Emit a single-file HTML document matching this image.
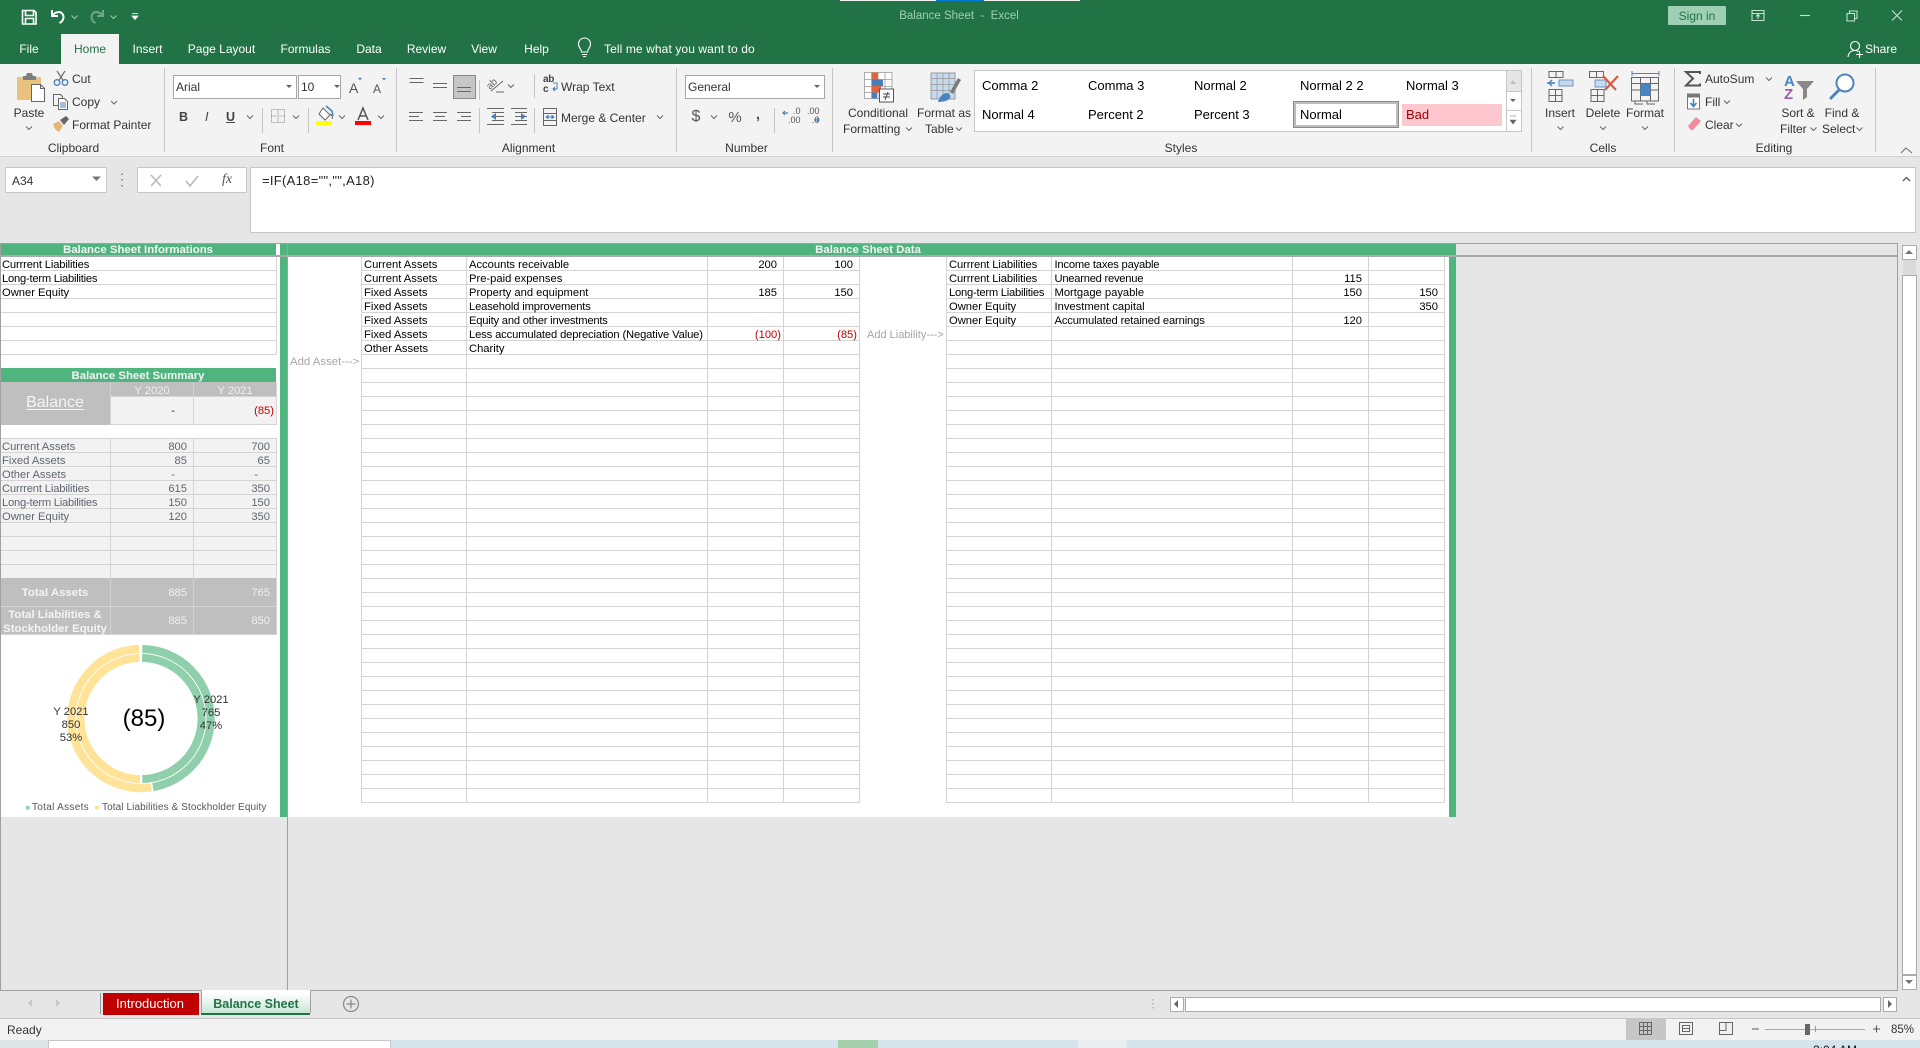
<!DOCTYPE html>
<html lang="en">
<head>
<meta charset="utf-8">
<title>Balance Sheet - Excel</title>
<style>
html,body{margin:0;padding:0;width:1920px;height:1048px;overflow:hidden;background:#e6e6e6;font-family:"Liberation Sans",Arial,sans-serif}
#r{position:relative;width:1920px;height:1048px;overflow:hidden}
.a{position:absolute}
.t{position:absolute;white-space:nowrap;line-height:14px;font-size:12px;color:#333}
.c{transform:translateX(-50%)}
.rt{transform:translateX(-100%)}
.w{color:#fff}
.d{font-size:11.2px;color:#000;margin-top:1px}
.g{font-size:11.2px;color:#5f6670;margin-top:1px}
.h{font-size:11.4px;font-weight:bold;color:#f4f4f4;margin-top:1px}
.n{color:#f0f0f0;font-size:11.2px;margin-top:1px}
.v{position:absolute;width:1px;background:#d4d4d4}
.gr{position:absolute;background-image:repeating-linear-gradient(to bottom,transparent 0,transparent 13px,#d4d4d4 13px,#d4d4d4 14px)}
.st{font-size:13px;color:#000}
svg{position:absolute;left:0;top:0}
</style>
</head>
<body>
<div id="r">

<!-- title + tabs -->
<div class="a" style="left:0;top:0;width:1920px;height:64px;background:#217346"></div>
<div class="a" style="left:840px;top:0;width:240px;height:1px;background:#f2f2f2"></div>
<div class="a" style="left:936px;top:0;width:48px;height:1px;background:#0078d7"></div>
<div class="t" style="left:959px;top:9px;color:#9fcfb4;font-size:11.5px;transform:translateX(-50%)">Balance Sheet &nbsp;-&nbsp; Excel</div>
<div class="a" style="left:1668px;top:6px;width:58px;height:19px;background:#9fcfb4;border-radius:1px"></div>
<div class="t c" style="left:1697px;top:9px;color:#217346">Sign in</div>
<div class="a" style="left:61px;top:34px;width:58px;height:30px;background:#f3f3f3"></div>
<div class="t c w" style="left:29px;top:42px">File</div>
<div class="t c" style="left:90px;top:42px;color:#217346">Home</div>
<div class="t c w" style="left:147.5px;top:42px">Insert</div>
<div class="t c w" style="left:221.5px;top:42px">Page Layout</div>
<div class="t c w" style="left:305.5px;top:42px">Formulas</div>
<div class="t c w" style="left:369px;top:42px">Data</div>
<div class="t c w" style="left:426.5px;top:42px">Review</div>
<div class="t c w" style="left:484px;top:42px">View</div>
<div class="t c w" style="left:536.5px;top:42px">Help</div>
<div class="t w" style="left:604px;top:42px;letter-spacing:.1px">Tell me what you want to do</div>
<div class="t w" style="left:1865px;top:42px">Share</div>

<!-- ribbon -->
<div class="a" style="left:0;top:64px;width:1920px;height:92px;background:#f3f3f3;border-bottom:1px solid #d2d2d2"></div>
<div class="a" style="left:164px;top:68px;width:1px;height:84px;background:#c6c6c6"></div>
<div class="a" style="left:396px;top:68px;width:1px;height:84px;background:#c6c6c6"></div>
<div class="a" style="left:676px;top:68px;width:1px;height:84px;background:#c6c6c6"></div>
<div class="a" style="left:832px;top:68px;width:1px;height:84px;background:#c6c6c6"></div>
<div class="a" style="left:1531px;top:68px;width:1px;height:84px;background:#c6c6c6"></div>
<div class="a" style="left:1674px;top:68px;width:1px;height:84px;background:#c6c6c6"></div>
<div class="a" style="left:1875px;top:68px;width:1px;height:84px;background:#c6c6c6"></div>

<!-- clipboard -->
<div class="t c" style="left:29px;top:106px">Paste</div>
<div class="t" style="left:72px;top:72px">Cut</div>
<div class="t" style="left:72px;top:95px">Copy</div>
<div class="t" style="left:72px;top:118px">Format Painter</div>
<div class="t c" style="left:73.5px;top:141px">Clipboard</div>

<!-- font -->
<div class="a" style="left:173px;top:75px;width:122px;height:22px;background:#fff;border:1px solid #a6a6a6"></div>
<div class="a" style="left:298px;top:75px;width:41px;height:22px;background:#fff;border:1px solid #a6a6a6"></div>
<div class="t" style="left:176px;top:80px">Arial</div>
<div class="t" style="left:301px;top:80px">10</div>
<div class="t" style="left:179px;top:110px;font-weight:bold;font-size:12.5px;color:#444">B</div>
<div class="t" style="left:205px;top:110px;font-style:italic;font-size:12.5px;color:#444">I</div>
<div class="t" style="left:226px;top:110px;font-weight:bold;font-size:12.5px;color:#444;text-decoration:underline">U</div>
<div class="t c" style="left:272px;top:141px">Font</div>

<!-- alignment -->
<div class="a" style="left:453px;top:75px;width:21px;height:22px;background:#c6c6c6;border:1px solid #8a8a8a"></div>
<div class="t" style="left:561px;top:80px">Wrap Text</div>
<div class="t" style="left:561px;top:111px">Merge &amp; Center</div>
<div class="t" style="left:543px;top:75px;font-size:10px;line-height:10px;color:#444;font-weight:bold;letter-spacing:-.3px">ab<br>c</div>
<div class="t c" style="left:528.5px;top:141px">Alignment</div>

<!-- number -->
<div class="a" style="left:685px;top:75px;width:138px;height:22px;background:#fff;border:1px solid #a6a6a6"></div>
<div class="t" style="left:688px;top:80px">General</div>
<div class="t c" style="left:696px;top:110px;font-size:16px;color:#555">$</div>
<div class="t c" style="left:735px;top:111px;font-size:15px;color:#555">%</div>
<div class="t c" style="left:758px;top:108px;font-size:15px;font-weight:bold;color:#555">,</div>
<div class="t" style="left:788px;top:107px;font-size:9px;line-height:9px;color:#555;text-align:right">&nbsp;.0<br>.00</div>
<div class="t" style="left:807px;top:107px;font-size:9px;line-height:9px;color:#555;text-align:right">.00<br>&nbsp;.0</div>
<div class="t c" style="left:746.5px;top:141px">Number</div>

<!-- styles -->
<div class="t c" style="left:878px;top:106px">Conditional</div>
<div class="t" style="left:843px;top:122px">Formatting</div>
<div class="t c" style="left:944px;top:106px">Format as</div>
<div class="t" style="left:925px;top:122px">Table</div>
<div class="a" style="left:974px;top:70px;width:546px;height:60px;background:#fff;border:1px solid #c6c6c6"></div>
<div class="t st" style="left:982px;top:79px">Comma 2</div>
<div class="t st" style="left:1088px;top:79px">Comma 3</div>
<div class="t st" style="left:1194px;top:79px">Normal 2</div>
<div class="t st" style="left:1300px;top:79px">Normal 2 2</div>
<div class="t st" style="left:1406px;top:79px">Normal 3</div>
<div class="t st" style="left:982px;top:108px">Normal 4</div>
<div class="t st" style="left:1088px;top:108px">Percent 2</div>
<div class="t st" style="left:1194px;top:108px">Percent 3</div>
<div class="a" style="left:1293px;top:101px;width:100px;height:21px;background:#fff;border:3px solid #bdbdbd;outline:1px solid #8a8a8a;outline-offset:-1px"></div>
<div class="t st" style="left:1300px;top:108px">Normal</div>
<div class="a" style="left:1402px;top:104px;width:100px;height:22px;background:#ffc7ce"></div>
<div class="t st" style="left:1406px;top:108px;color:#9c0006">Bad</div>
<div class="a" style="left:1506px;top:71px;width:14px;height:20px;background:#e6e6e6;border-left:1px solid #c6c6c6"></div>
<div class="a" style="left:1506px;top:91px;width:14px;height:19px;background:#fff;border-left:1px solid #c6c6c6;border-top:1px solid #c6c6c6"></div>
<div class="a" style="left:1506px;top:110px;width:14px;height:20px;background:#fff;border-left:1px solid #c6c6c6;border-top:1px solid #c6c6c6"></div>
<div class="t c" style="left:1181px;top:141px">Styles</div>

<!-- cells -->
<div class="t c" style="left:1560px;top:106px">Insert</div>
<div class="t c" style="left:1603px;top:106px">Delete</div>
<div class="t c" style="left:1645px;top:106px">Format</div>
<div class="t c" style="left:1603px;top:141px">Cells</div>

<!-- editing -->
<div class="t" style="left:1705px;top:72px">AutoSum</div>
<div class="t" style="left:1705px;top:95px">Fill</div>
<div class="t" style="left:1705px;top:118px">Clear</div>
<div class="t c" style="left:1798px;top:106px">Sort &amp;</div>
<div class="t" style="left:1780px;top:122px">Filter</div>
<div class="t c" style="left:1842px;top:106px">Find &amp;</div>
<div class="t" style="left:1822px;top:122px">Select</div>
<div class="t c" style="left:1774px;top:141px">Editing</div>

<!-- formula bar -->
<div class="a" style="left:5px;top:167px;width:100px;height:24px;background:#fff;border:1px solid #c6c6c6"></div>
<div class="t" style="left:12px;top:174px">A34</div>
<div class="a" style="left:137px;top:167px;width:108px;height:24px;background:#fff;border:1px solid #c6c6c6"></div>
<div class="a" style="left:250px;top:167px;width:1664px;height:64px;background:#fff;border:1px solid #c6c6c6"></div>
<div class="t" style="left:262px;top:174px;font-size:13px;letter-spacing:.3px;color:#222">=IF(A18="","",A18)</div>
<div class="t" style="left:222px;top:173px;font-family:'Liberation Serif',serif;font-style:italic;font-size:14px;color:#555">fx</div>

<!-- sheet -->
<div class="a" style="left:0;top:243px;width:1898px;height:1px;background:#a0a0a0"></div>
<div class="a" style="left:0;top:243px;width:1px;height:747px;background:#a0a0a0"></div>
<div class="a" style="left:287px;top:243px;width:1px;height:747px;background:#a0a0a0"></div>
<div class="a" style="left:1897px;top:243px;width:1px;height:747px;background:#a0a0a0"></div>
<div class="a" style="left:0;top:990px;width:1898px;height:1px;background:#a0a0a0"></div>
<div class="a" style="left:1px;top:244px;width:279px;height:573px;background:#fff"></div>
<div class="a" style="left:288px;top:257px;width:1161px;height:560px;background:#fff"></div>
<div class="a" style="left:280px;top:244px;width:7px;height:573px;background:#50b47e"></div>
<div class="a" style="left:1449px;top:257px;width:7px;height:560px;background:#50b47e"></div>
<div class="a" style="left:1px;top:244px;width:275px;height:11px;background:#50b47e"></div>
<div class="a" style="left:288px;top:244px;width:1168px;height:11px;background:#50b47e"></div>
<div class="a" style="left:1px;top:255px;width:1896px;height:2px;background:#ababab"></div>
<div class="a" style="left:276px;top:244px;width:4px;height:11px;background:#fff"></div>
<div class="t c h" style="left:138px;top:242px">Balance Sheet Informations</div>
<div class="t c h" style="left:868px;top:242px">Balance Sheet Data</div>

<!-- info table -->
<div class="gr" style="left:1px;top:257px;width:276px;height:98px"></div>
<div class="v" style="left:276px;top:257px;height:98px"></div>
<div class="t d" style="left:2px;top:257px;letter-spacing:-.15px">Currrent Liabilities</div>
<div class="t d" style="left:2px;top:271px;letter-spacing:-.23px">Long-term Liabilities</div>
<div class="t d" style="left:2px;top:285px">Owner Equity</div>

<!-- summary -->
<div class="a" style="left:1px;top:368px;width:275px;height:14px;background:#50b47e"></div>
<div class="t c h" style="left:138px;top:368px">Balance Sheet Summary</div>
<div class="a" style="left:1px;top:382px;width:109px;height:43px;background:#bfbfbf"></div>
<div class="a" style="left:111px;top:382px;width:165px;height:14px;background:#bfbfbf"></div>
<div class="a" style="left:111px;top:397px;width:165px;height:28px;background:#f2f2f2"></div>
<div class="v" style="left:193px;top:382px;height:43px"></div>
<div class="v" style="left:110px;top:382px;height:43px"></div>
<div class="v" style="left:276px;top:382px;height:43px"></div>
<div class="a" style="left:111px;top:396px;width:165px;height:1px;background:#d4d4d4"></div>
<div class="a" style="left:111px;top:424px;width:166px;height:1px;background:#d4d4d4"></div>
<div class="t c" style="left:55px;top:395px;font-size:16px;line-height:16px;color:#f5f5f5;text-decoration:underline;text-underline-offset:2px">Balance</div>
<div class="t c n" style="left:152px;top:383px">Y 2020</div>
<div class="t c n" style="left:235px;top:383px">Y 2021</div>
<div class="t rt g" style="left:175px;top:403px;color:#222">-</div>
<div class="t rt g" style="left:274px;top:403px;color:#c00000">(85)</div>

<div class="a" style="left:1px;top:438px;width:275px;height:140px;background:#f2f2f2"></div>
<div class="a" style="left:1px;top:438px;width:276px;height:1px;background:#d4d4d4"></div>
<div class="gr" style="left:1px;top:439px;width:276px;height:140px"></div>
<div class="v" style="left:110px;top:438px;height:196px"></div>
<div class="v" style="left:193px;top:438px;height:196px"></div>
<div class="v" style="left:276px;top:438px;height:196px"></div>
<div class="a" style="left:1px;top:578px;width:275px;height:56px;background:#bfbfbf"></div>
<div class="v" style="left:110px;top:578px;height:56px"></div>
<div class="v" style="left:193px;top:578px;height:56px"></div>
<div class="v" style="left:276px;top:578px;height:57px"></div>
<div class="a" style="left:1px;top:606px;width:275px;height:1px;background:#d4d4d4"></div>
<div class="a" style="left:1px;top:634px;width:276px;height:1px;background:#d4d4d4"></div>

<div class="t g" style="left:2px;top:439px">Current Assets</div><div class="t rt g" style="left:187px;top:439px">800</div><div class="t rt g" style="left:270px;top:439px">700</div>
<div class="t g" style="left:2px;top:453px">Fixed Assets</div><div class="t rt g" style="left:187px;top:453px">85</div><div class="t rt g" style="left:270px;top:453px">65</div>
<div class="t g" style="left:2px;top:467px">Other Assets</div><div class="t rt g" style="left:175px;top:467px">-</div><div class="t rt g" style="left:258px;top:467px">-</div>
<div class="t g" style="left:2px;top:481px;letter-spacing:-.15px">Currrent Liabilities</div><div class="t rt g" style="left:187px;top:481px">615</div><div class="t rt g" style="left:270px;top:481px">350</div>
<div class="t g" style="left:2px;top:495px;letter-spacing:-.23px">Long-term Liabilities</div><div class="t rt g" style="left:187px;top:495px">150</div><div class="t rt g" style="left:270px;top:495px">150</div>
<div class="t g" style="left:2px;top:509px">Owner Equity</div><div class="t rt g" style="left:187px;top:509px">120</div><div class="t rt g" style="left:270px;top:509px">350</div>

<div class="t c h" style="left:55px;top:585px">Total Assets</div>
<div class="t rt n" style="left:187px;top:585px">885</div><div class="t rt n" style="left:270px;top:585px">765</div>
<div class="t c h" style="left:55px;top:607px">Total Liabilities &amp;</div>
<div class="t c h" style="left:55px;top:621px">Stockholder Equity</div>
<div class="t rt n" style="left:187px;top:613px">885</div><div class="t rt n" style="left:270px;top:613px">850</div>

<!-- chart -->
<svg width="288" height="820" viewBox="0 0 288 820" style="pointer-events:none">
<g fill="none" transform="rotate(-90 141 718.5)">
<circle cx="141" cy="718.5" r="69.6" stroke="#8fcfac" stroke-width="8.2" pathLength="100" stroke-dasharray="47 100" stroke-dashoffset="-.3"/>
<circle cx="141" cy="718.5" r="69.6" stroke="#ffe398" stroke-width="8.2" pathLength="100" stroke-dasharray="52 100" stroke-dashoffset="-47.7"/>
<circle cx="141" cy="718.5" r="60.6" stroke="#8fcfac" stroke-width="8" pathLength="100" stroke-dasharray="49.4 100" stroke-dashoffset="-.3"/>
<circle cx="141" cy="718.5" r="60.6" stroke="#ffe398" stroke-width="8" pathLength="100" stroke-dasharray="49.4 100" stroke-dashoffset="-50.3"/>
</g>
<rect x="26" y="806" width="3.5" height="3.5" fill="#8fcfac"/>
<rect x="95" y="806" width="4" height="3.5" fill="#ffe398"/>
</svg>
<div class="t c" style="left:71px;top:706px;font-size:11.2px;line-height:13px;color:#333;text-align:center;transform:translateX(-50%)">Y 2021<br>850<br>53%</div>
<div class="t c" style="left:211px;top:694px;font-size:11.2px;line-height:13px;color:#333;text-align:center;transform:translateX(-50%)">Y 2021<br>765<br>47%</div>
<div class="t c" style="left:144px;top:705px;font-size:24px;line-height:28px;color:#000">(85)</div>
<div class="t" style="left:32px;top:801px;font-size:10px;color:#555;letter-spacing:.3px">Total Assets</div>
<div class="t" style="left:102px;top:801px;font-size:10px;color:#555;letter-spacing:.1px">Total Liabilities &amp; Stockholder Equity</div>

<!-- data table 1 -->
<div class="gr" style="left:361px;top:257px;width:499px;height:546px"></div>
<div class="v" style="left:361px;top:257px;height:546px"></div>
<div class="v" style="left:466px;top:257px;height:546px"></div>
<div class="v" style="left:707px;top:257px;height:546px"></div>
<div class="v" style="left:783px;top:257px;height:546px"></div>
<div class="v" style="left:859px;top:257px;height:546px"></div>
<div class="t d" style="left:364px;top:257px">Current Assets</div><div class="t d" style="left:469px;top:257px">Accounts receivable</div><div class="t d rt" style="left:777px;top:257px">200</div><div class="t d rt" style="left:853px;top:257px">100</div>
<div class="t d" style="left:364px;top:271px">Current Assets</div><div class="t d" style="left:469px;top:271px">Pre-paid expenses</div>
<div class="t d" style="left:364px;top:285px">Fixed Assets</div><div class="t d" style="left:469px;top:285px">Property and equipment</div><div class="t d rt" style="left:777px;top:285px">185</div><div class="t d rt" style="left:853px;top:285px">150</div>
<div class="t d" style="left:364px;top:299px">Fixed Assets</div><div class="t d" style="left:469px;top:299px;letter-spacing:-.15px">Leasehold improvements</div>
<div class="t d" style="left:364px;top:313px">Fixed Assets</div><div class="t d" style="left:469px;top:313px;letter-spacing:-.2px">Equity and other investments</div>
<div class="t d" style="left:364px;top:327px">Fixed Assets</div><div class="t d" style="left:469px;top:327px;letter-spacing:-.13px">Less accumulated depreciation (Negative Value)</div><div class="t d rt" style="left:781px;top:327px;color:#c00000">(100)</div><div class="t d rt" style="left:857px;top:327px;color:#c00000">(85)</div>
<div class="t d" style="left:364px;top:341px">Other Assets</div><div class="t d" style="left:469px;top:341px">Charity</div>
<div class="t d" style="left:290px;top:354px;color:#a6a6a6;font-size:11.4px">Add Asset---&gt;</div>

<!-- data table 2 -->
<div class="gr" style="left:946px;top:257px;width:499px;height:546px"></div>
<div class="v" style="left:946px;top:257px;height:546px"></div>
<div class="v" style="left:1051px;top:257px;height:546px"></div>
<div class="v" style="left:1292px;top:257px;height:546px"></div>
<div class="v" style="left:1368px;top:257px;height:546px"></div>
<div class="v" style="left:1444px;top:257px;height:546px"></div>
<div class="t d" style="left:949px;top:257px;letter-spacing:-.1px">Currrent Liabilities</div><div class="t d" style="left:1054.5px;top:257px;letter-spacing:-.2px">Income taxes payable</div>
<div class="t d" style="left:949px;top:271px;letter-spacing:-.1px">Currrent Liabilities</div><div class="t d" style="left:1054.5px;top:271px;letter-spacing:-.25px">Unearned revenue</div><div class="t d rt" style="left:1362px;top:271px">115</div>
<div class="t d" style="left:949px;top:285px;letter-spacing:-.23px">Long-term Liabilities</div><div class="t d" style="left:1054.5px;top:285px">Mortgage payable</div><div class="t d rt" style="left:1362px;top:285px">150</div><div class="t d rt" style="left:1438px;top:285px">150</div>
<div class="t d" style="left:949px;top:299px">Owner Equity</div><div class="t d" style="left:1054.5px;top:299px">Investment capital</div><div class="t d rt" style="left:1438px;top:299px">350</div>
<div class="t d" style="left:949px;top:313px">Owner Equity</div><div class="t d" style="left:1054.5px;top:313px;letter-spacing:-.14px">Accumulated retained earnings</div><div class="t d rt" style="left:1362px;top:313px">120</div>
<div class="t d" style="left:867px;top:327px;color:#a6a6a6;font-size:11px">Add Liability---&gt;</div>

<!-- vertical scrollbar -->
<div class="a" style="left:1902px;top:245px;width:13px;height:13px;background:#fff;border:1px solid #ababab"></div>
<div class="a" style="left:1903px;top:260px;width:13px;height:15px;background:#dadada"></div>
<div class="a" style="left:1902px;top:275px;width:13px;height:698px;background:#fff;border:1px solid #ababab"></div>
<div class="a" style="left:1902px;top:975px;width:13px;height:13px;background:#fff;border:1px solid #ababab"></div>

<!-- sheet tabs -->
<div class="a" style="left:100px;top:993px;width:1px;height:21px;background:#999"></div>
<div class="a" style="left:103px;top:993px;width:96px;height:22px;background:#c00000"></div>
<div class="t c" style="left:150px;top:997px;color:#fff;font-size:13px">Introduction</div>
<div class="a" style="left:201px;top:990px;width:108px;height:23px;background:linear-gradient(#fff 15%,#c6e6d5);border-left:1px solid #a0a0a0;border-right:1px solid #a0a0a0"></div>
<div class="a" style="left:201px;top:1013px;width:109px;height:2px;background:#217346"></div>
<div class="t c" style="left:256px;top:997px;color:#217346;font-size:12.5px;font-weight:bold">Balance Sheet</div>

<!-- h scrollbar -->
<div class="a" style="left:1170px;top:997px;width:12px;height:13px;background:#fff;border:1px solid #ababab"></div>
<div class="a" style="left:1185px;top:997px;width:694px;height:13px;background:#fff;border:1px solid #ababab"></div>
<div class="a" style="left:1883px;top:997px;width:12px;height:13px;background:#fff;border:1px solid #ababab"></div>

<!-- status bar -->
<div class="a" style="left:0;top:1018px;width:1920px;height:1px;background:#c6c6c6"></div>
<div class="a" style="left:0;top:1019px;width:1920px;height:21px;background:#f2f2f2"></div>
<div class="t" style="left:7px;top:1023px">Ready</div>
<div class="a" style="left:1626px;top:1019px;width:40px;height:21px;background:#c6c6c6"></div>
<div class="t" style="left:1891px;top:1023px;font-size:11.5px">85%</div>

<!-- desktop strip -->
<div class="a" style="left:0;top:1040px;width:1920px;height:8px;background:#d5e4ec"></div>
<div class="a" style="left:0;top:1040px;width:48px;height:8px;background:#dde7ea"></div>
<div class="a" style="left:48px;top:1040px;width:343px;height:8px;background:#fff;border:1px solid #c6c6c6;border-bottom:0;box-sizing:border-box"></div>
<div class="a" style="left:838px;top:1040px;width:40px;height:8px;background:#a3d0ab"></div>
<div class="a" style="left:1078px;top:1040px;width:49px;height:8px;background:#e8eef0"></div>
<div class="t" style="left:1813px;top:1043px;font-size:12px;color:#111">2:04 AM</div>

<!-- icons -->
<svg width="1920" height="1048" viewBox="0 0 1920 1048" style="pointer-events:none">
<defs>
<symbol id="ch" viewBox="0 0 7 4" overflow="visible"><path d="M.5.5 3.5 3.5 6.5.5" fill="none" stroke="#666" stroke-width="1"/></symbol>
<symbol id="chw" viewBox="0 0 7 4" overflow="visible"><path d="M.5.5 3.5 3.5 6.5.5" fill="none" stroke="#9fcfb4" stroke-width="1"/></symbol>
</defs>

<!-- QAT -->
<g fill="none" stroke="#fff" stroke-width="1.6">
<path d="M22.5 10.5h11.5l2 2v11.5h-13.5z"/><path d="M25.5 10.5v5h8v-5M25.5 24v-5.5h8V24"/>
<path stroke-width="2" d="M52 10v6h6M52.5 15.5c3-4 8-4.500 10-1.500 2 3 1 7-3 9"/>
<path stroke="#6fa889" stroke-width="2" d="M103 10v6h-6M102.500 15.500c-3-4-8-4.500-10-1.500-2 3-1 7 3 9"/>
</g>
<use href="#chw" x="71" y="15" width="7" height="4"/>
<use href="#chw" x="110" y="15" width="7" height="4"/>
<path d="M132 13.500h6M132 16h6l-3 3.500z" fill="#fff" stroke="#fff" stroke-width=".8"/>

<!-- lightbulb, share, window controls -->
<g fill="none" stroke="#fff" stroke-width="1.1">
<path d="M581.500 52c0-3-3-4-3-8a6 6 0 0 1 12 0c0 4-3 5-3 8zM582 54.500h5M583 56.500h3"/>
<circle cx="1855" cy="46" r="4.500"/><path d="M1848 57c.5-4 3-6.500 7-6.500 1.500 0 2.500.3 3.500 1M1856 54.500h7M1859.500 51v7"/>
</g>
<g fill="none" stroke="#c6e2d2" stroke-width="1.1">
<path d="M1752 10.500h12v10h-12zM1752 13.500h12M1758 19v-4M1756 16.500l2-2 2 2"/>
<path d="M1800 15.500h10"/>
<path d="M1847 13.500h7.500v7.500H1847zM1849.500 13.500v-2.500h7.500v7.500h-2.500"/>
<path d="M1892 10.500 1902 20.500M1902 10.500 1892 20.500"/>
</g>

<!-- paste -->
<path d="M17 77h24v23H17z" fill="#e9c27e"/><path d="M23 76h3l1-3h5l1 3h3v4H23z" fill="#7f7f7f"/>
<path d="M31.500 84.500h9l4 4v13h-13z" fill="#fff" stroke="#666"/><path d="M40.500 84.500v4h4" fill="none" stroke="#666"/>
<use href="#ch" x="25.500" y="126" width="7" height="4"/>
<!-- cut -->
<g fill="none" stroke="#6f6f6f" stroke-width="1.200"><path d="M57 71 63.500 81M65 71 58.500 81"/></g>
<g fill="none" stroke="#4a7eb8" stroke-width="1.300"><circle cx="57" cy="82.500" r="2.800"/><circle cx="65" cy="82.500" r="2.800"/></g>
<!-- copy -->
<g fill="none" stroke="#666"><path d="M53.500 94.500h7l2 2v9h-9z" fill="#f3f3f3"/><path d="M58.500 98.500h6l3 3v8h-9z" fill="#fff"/></g>
<path d="M60 103h6M60 105h6M60 107h6" stroke="#4a7eb8"/>
<use href="#ch" x="110.500" y="100.500" width="7" height="4"/>
<!-- painter -->
<path d="M53 124l6-3 4 5-4 6c-3-1-5-4-6-8z" fill="#e6b877"/><path d="M60 120l6-4 3 3-5 6z" fill="#666"/>

<!-- font -->
<path d="M286 85l3 3 3-3zM334 85l3 3 3-3z" fill="#666"/>
<text x="349" y="93" font-family="Liberation Sans" font-size="14" fill="#555">A</text><text x="373" y="93" font-family="Liberation Sans" font-size="12" fill="#555">A</text>
<path d="M360 77l-2 2.500h4zM384 80.500l-2-2.500h4z" fill="#4a7eb8"/>
<use href="#ch" x="246.500" y="115" width="7" height="4"/><use href="#ch" x="292.500" y="115" width="7" height="4"/><use href="#ch" x="338.500" y="115" width="7" height="4"/><use href="#ch" x="377.500" y="115" width="7" height="4"/>
<path d="M262.500 108v25M308.500 108v25" stroke="#c6c6c6"/>
<path d="M271.500 109.500h13v13h-13zM278 109.500v13M271.500 116h13" fill="none" stroke="#888" stroke-dasharray="1 1"/>
<path d="M323 108l7 7-5 5-6-6zM330 114c2 1 3 3 2 5" fill="#fff" stroke="#666"/><path d="M326 106l6 5 1 5" fill="none" stroke="#4a7eb8" stroke-width="1.500"/>
<rect x="316" y="121" width="16" height="4" fill="#ff0"/>
<path d="M358 120l5-12 5 12M360 116h6" fill="none" stroke="#555" stroke-width="1.500"/>
<rect x="355" y="121" width="16" height="4" fill="#f00"/>

<!-- alignment lines -->
<g stroke="#666" fill="none">
<path d="M409.500 78.500h14M409.500 82.500h14M433 83.500h14M433 87.500h14M457 87.500h14M457 91.500h14"/>
<path d="M409 112.500h14M409 116.500h10M409 120.500h14M433 112.500h14M435 116.500h10M433 120.500h14M457 112.500h14M461 116.500h10M457 120.500h14"/>
<path d="M492 112.500h12M492 116.500h12M492 120.500h12M487 124.500h17M487 108.500h17M515 112.500h12M515 116.500h12M515 120.500h12M511 124.500h16M511 108.500h16"/>
<path d="M543.500 108.500h13v17h-13zM543.500 113.500h13M543.500 120.500h13"/>
<path d="M491 91l12-10M496 92h8"/>
</g>
<text x="0" y="0" transform="translate(490 90) rotate(-45)" font-family="Liberation Sans" font-size="10" fill="#666">ab</text>
<path d="M479.500 80v20M479.500 108v25M534.500 74v24M534.500 108v25" stroke="#c6c6c6" fill="none"/>
<path d="M491 117l5-3.500v7zM526 117l-5-3.500v7z" fill="#4a7eb8" transform="translate(0 -.5)"/>
<path d="M553 83h4v6h-3M553 89l1.500-1.500v3z" fill="none" stroke="#4a7eb8"/>
<path d="M546 117h8M546 117l2-1.500v3zM554 117l-2-1.500v3z" fill="none" stroke="#4a7eb8"/>
<use href="#ch" x="507.500" y="84" width="7" height="4"/><use href="#ch" x="656.500" y="115" width="7" height="4"/>

<!-- number -->
<path d="M814 85l3 3 3-3z" fill="#666"/>
<use href="#ch" x="710.500" y="115" width="7" height="4"/>
<path d="M774.500 108v25" stroke="#c6c6c6"/>
<path d="M788 113h-5m2-2-2 2 2 2M814 120h5m-2-2 2 2-2 2" stroke="#4a7eb8" fill="none" stroke-width="1.200"/>

<!-- conditional formatting icon -->
<path d="M864.500 72.500h27.500v26h-27.500zM871.500 72.500v26M878 72.500v26M885 72.500v26M864.500 79.500h27.500M864.500 86.500h27.500M864.500 92.500h27.500" fill="#fff" stroke="#999" stroke-width=".8"/>
<rect x="872" y="72.500" width="6" height="7" fill="#e0653f"/><rect x="872" y="79.500" width="11" height="6.500" fill="#4a7eb8"/><rect x="872" y="86" width="9" height="6.500" fill="#e0653f"/><rect x="872" y="92.500" width="5" height="6" fill="#4a7eb8"/>
<rect x="879.500" y="89" width="14" height="13" fill="#fff" stroke="#555"/><path d="M883 94h7M883 97h7M885 100l3-8" stroke="#444" fill="none"/>
<use href="#ch" x="905.500" y="127" width="7" height="4"/>
<!-- format as table icon -->
<rect x="931" y="73" width="24" height="26" fill="#c6d9ee" stroke="#999"/>
<path d="M931 78.500h24M931 84.500h24M931 90.500h24M937 73v26M943 73v26M949 73v26" stroke="#999" fill="none" stroke-width=".8"/>
<path d="M950 92l8-14 3 2-8 14z" fill="#7a7a7a"/><path d="M938 102c1-5 5-9 9-9 3 1 4 3 3 5-2 3-7 4-12 4z" fill="#4a85c0"/>
<use href="#ch" x="955.500" y="127" width="7" height="4"/>

<!-- styles scrollers -->
<path d="M1510 84l3-4 3 4z" fill="#c0c0c0"/><path d="M1510 99l3 3 3-3z" fill="#666"/><path d="M1510 116h6M1510 120l3 4 3-4z" fill="#666" stroke="#666" stroke-width=".6"/>

<!-- cells icons -->
<g fill="none" stroke="#666">
<path d="M1549 89.500h13v12h-13zM1555.500 89.500v12M1549 95.500h13"/>
<path d="M1549 71.500h14v6h-14zM1556 71.500v6"/>
<path d="M1591 89.500h13v12h-13zM1597.500 89.500v12M1591 95.500h13"/>
<path d="M1589.500 71.500h14v6h-14zM1596.500 71.500v6"/>
<path d="M1631.500 77.500h27V101h-27zM1631.500 83.500h27M1640.500 77.500v23.500M1650.500 77.500v23.500M1631.500 90h27M1635 101v3h8M1647 101v3h8"/>
</g>
<rect x="1559" y="80" width="14" height="6" fill="#c6d9ee" stroke="#6d94c0"/><path d="M1547 83h8m-3-3-3 3 3 3" fill="none" stroke="#3f7fc1" stroke-width="1.400"/>
<rect x="1595" y="80" width="11" height="7" fill="#c6d9ee" stroke="#6d94c0"/>
<path d="M1603 76l13 14M1618 76l-13 14" stroke="#d9593d" stroke-width="2.200" fill="none"/>
<rect x="1640.500" y="84" width="10" height="12" fill="#4a85c0"/>
<path d="M1632 73.500h27M1632 71v5M1659 71v5" stroke="#4a85c0" fill="none"/>
<use href="#ch" x="1557" y="126" width="7" height="4"/><use href="#ch" x="1599.500" y="126" width="7" height="4"/><use href="#ch" x="1641.500" y="126" width="7" height="4"/>

<!-- editing icons -->
<path d="M1700 74v-2h-14l7 6.500-7 7h14v-2" fill="none" stroke="#555" stroke-width="2"/>
<rect x="1687.500" y="94" width="12" height="15" fill="#fff" stroke="#777"/><rect x="1687.500" y="94" width="12" height="3.500" fill="#777"/>
<path d="M1693.500 99v7m-3-3 3 3.500 3-3.500" fill="none" stroke="#3f7fc1" stroke-width="1.600"/>
<path d="M1688 126l8-9 5 4-8 9h-2z" fill="#ef8b9b"/>
<use href="#ch" x="1765.500" y="77" width="7" height="4"/><use href="#ch" x="1723.500" y="100" width="7" height="4"/><use href="#ch" x="1735.500" y="123" width="7" height="4"/>
<text x="1784" y="86" font-family="Liberation Sans" font-size="15" font-weight="bold" fill="#4a85c0">A</text>
<text x="1784" y="99" font-family="Liberation Sans" font-size="15" font-weight="bold" fill="#9b59b6">Z</text>
<path d="M1796 81h18l-7 8v8l-4 3V89z" fill="#888"/>
<circle cx="1845" cy="83" r="8.500" fill="#fff" stroke="#4a85c0" stroke-width="2"/><path d="M1839 90l-9 9" stroke="#4a85c0" stroke-width="3" fill="none"/>
<use href="#ch" x="1810" y="127" width="7" height="4"/><use href="#ch" x="1856" y="127" width="7" height="4"/>
<path d="M1901 153l5-5 6 5" fill="none" stroke="#666"/>

<!-- formula bar -->
<path d="M93 177l4.500 4.500L102 177z" fill="#777" transform="translate(-1 -.5)"/>
<path d="M122 173.500v1.500M122 179v1.500M122 185v1.500" stroke="#9a9a9a" stroke-width="2"/>
<path d="M151 175l10 11M161 175l-10 11" stroke="#b8b8b8" stroke-width="1.400" fill="none"/>
<path d="M186 181l4 5 8-10" stroke="#b8b8b8" stroke-width="1.600" fill="none"/>
<path d="M1903 181l3.500-3.500 3.500 3.500" stroke="#666" stroke-width="1.500" fill="none"/>

<!-- v scrollbar arrows -->
<path d="M1905 254l4-4 4 4z" fill="#777"/><path d="M1905 980l4 4 4-4z" fill="#777"/>

<!-- tab bar -->
<path d="M32 999v8l-4-4z" fill="#c6c6c6"/><path d="M56 999v8l4-4z" fill="#c6c6c6"/>
<circle cx="351" cy="1004" r="7.500" fill="none" stroke="#888" stroke-width="1.200"/><path d="M346.500 1004h9M351 999.500v9" stroke="#888" stroke-width="1.200"/>
<path d="M1153 999v1.500M1153 1003v1.500M1153 1007v1.500" stroke="#999"/>
<path d="M1178 1000v8l-4-4z" fill="#666"/><path d="M1888 1000v8l4-4z" fill="#666"/>

<!-- status icons -->
<g fill="none" stroke="#666">
<path d="M1639.500 1022.500h12v12h-12zM1643.500 1022.500v12M1647.500 1022.500v12M1639.500 1026.500h12M1639.500 1030.500h12"/>
<path d="M1679.500 1022.500h13v12h-13zM1682.500 1025.500h7v6h-7zM1682.500 1028.500h7"/>
<path d="M1719.500 1022.500h13v12h-13zM1719.500 1030.500h6.500v-8"/>
<path d="M1752 1029h7M1873 1029h7M1876.500 1025.500v7" stroke="#555"/>
<path d="M1765 1029.500h100" stroke="#aaa"/><path d="M1815.500 1026v6" stroke="#999"/>
</g>
<rect x="1805" y="1024" width="5" height="11" fill="#666"/>
</svg>
</div>
</body>
</html>
